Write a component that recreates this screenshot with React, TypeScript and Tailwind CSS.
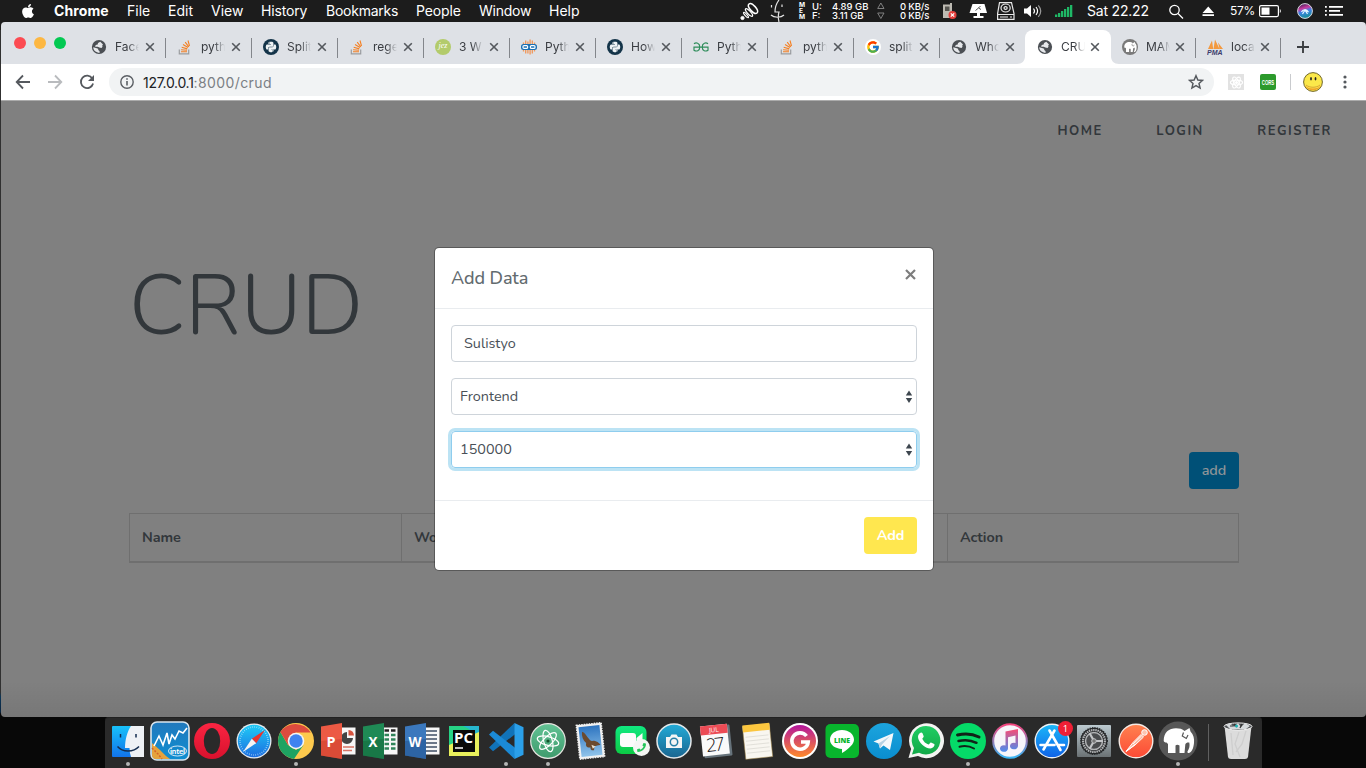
import React from "react";
import { FaApple, FaPython, FaPhoneAlt } from "react-icons/fa";
import { FcGoogle } from "react-icons/fc";

/* ---------- menu bar ---------- */

const menus: [string, string][] = [
  ["Chrome", "w-[73px] font-bold tracking-[0.1px]"],
  ["File", "w-[41px]"],
  ["Edit", "w-[43px]"],
  ["View", "w-[50px]"],
  ["History", "w-[65px] tracking-[-0.15px]"],
  ["Bookmarks", "w-[90px] tracking-[-0.25px]"],
  ["People", "w-[63px] tracking-[-0.15px]"],
  ["Window", "w-[70px] tracking-[-0.25px]"],
  ["Help", "w-[60px]"],
];

function MenuBar() {
  return (
    <header className="flex h-[22px] shrink-0 items-center bg-[#1c1c1c] text-[14px] leading-[22px] text-white">
      <div className="w-[54px] shrink-0 pl-[20px]">
        <FaApple size={16} />
      </div>
      {menus.map(([name, cls]) => (
        <span key={name} className={`shrink-0 whitespace-nowrap ${cls}`}>
          {name}
        </span>
      ))}
      <div className="ml-auto flex h-full shrink-0 items-center">
        <svg className="w-[30px]" height="22" viewBox="0 0 30 22" fill="none" stroke="#fff">
          <circle cx="2.500" cy="18" r="1.600" fill="#fff" />
          <ellipse cx="13" cy="8.500" rx="2.800" ry="6" strokeWidth="1.500" transform="rotate(-42 13 8.500)" />
          <ellipse cx="9" cy="12.500" rx="1.600" ry="5" strokeWidth="1.300" transform="rotate(-42 9 12.500)" />
          <ellipse cx="6" cy="15" rx="1" ry="3.500" strokeWidth="1.200" transform="rotate(-42 6 15)" />
        </svg>
        <svg className="w-[29px]" height="22" viewBox="0 0 29 22" fill="none" stroke="#e4e4e4" strokeWidth="1.200">
          <path d="M9 0C6 4 5 8 5 12h4c-1 3-1 6 0 10M1 15c3 3 10 3 13 0M1.500 5v2.500M12 4.500V7" />
        </svg>
        <div className="flex w-[13px] flex-col text-[6.500px] leading-[6.300px] font-bold">
          <span>M</span>
          <span>E</span>
          <span>M</span>
        </div>
        <div className="flex w-[17px] flex-col text-[9.500px] leading-[9.500px] font-medium">
          <span>U:</span>
          <span>F:</span>
        </div>
        <div className="flex w-[48px] flex-col pl-[3px] text-[9.500px] leading-[9.500px] font-medium whitespace-nowrap">
          <span>4.89 GB</span>
          <span>3.11 GB</span>
        </div>
        <svg className="w-[23px]" height="22" viewBox="0 0 23 22" fill="none" stroke="#8a8a8a" strokeWidth="0.900">
          <path d="M0.700 8.500h6.300l-3.150-5.500zM0.700 13h6.300l-3.150 5.500z" />
        </svg>
        <div className="flex w-[43px] flex-col text-[9.500px] leading-[9.500px] font-medium tracking-[-0.15px] whitespace-nowrap">
          <span>0 KB/s</span>
          <span>0 KB/s</span>
        </div>
        <svg className="w-[26px]" height="22" viewBox="0 0 26 22">
          <path d="M0 4.500h7V3h2v15H0z" fill="#bdbab2" />
          <path d="M2 6.500h4.500v4.500H2z" fill="#55544f" />
          <circle cx="9.500" cy="15" r="4" fill="#e5403d" />
          <path d="M7.800 13.300l3.400 3.400m0-3.400l-3.400 3.400" stroke="#fff" strokeWidth="1.200" />
        </svg>
        <svg className="w-[28px]" height="22" viewBox="0 0 28 22">
          <path d="M3.500 4h12l2.500 9H0.500z" fill="#fff" />
          <path d="M6.500 10.500l3-2.500 2.500 1.500M9.500 8l2-2" stroke="#444" strokeWidth="0.900" fill="none" />
          <path d="M8 13h3v3h3.500v2h-10v-2H8z" fill="#fff" />
        </svg>
        <svg className="w-[27px]" height="22" viewBox="0 0 27 22" fill="none" stroke="#e8e8e8" strokeWidth="1.200">
          <path d="M2.500 2.600h12l2.500 11v5.800H0.600v-5.800zM0.600 14.500H17" />
          <ellipse cx="8.600" cy="8" rx="4.600" ry="4" />
          <ellipse cx="8.600" cy="8" rx="1.600" ry="1.300" />
          <path d="M3 17h8M13 17h2" />
        </svg>
        <svg className="w-[31px]" height="22" viewBox="0 0 31 22" fill="none" stroke="#fff" strokeWidth="1.200">
          <path d="M0 8.500h3l4-3.500v12l-4-3.500H0z" fill="#fff" stroke="none" />
          <path d="M9.500 8.500c1.200 1.500 1.200 3.500 0 5M12 7c2 2.500 2 5.500 0 8" />
          <path d="M14.300 5.300c3 3.500 3 8 0 11.500" stroke="#999" />
        </svg>
        <svg className="w-[32px]" height="22" viewBox="0 0 32 22" fill="#1fb866">
          <path d="M0 14.500h2.300V17H0zM3 13h2.300v4H3zM6 11h2.300v6H6zM9 9h2.300v8H9zM12 7h2.300v10H12zM15 5h2.300v12H15z" />
        </svg>
        <span className="w-[82px] tracking-[-0.2px] whitespace-nowrap">Sat 22.22</span>
        <svg className="w-[33px]" height="22" viewBox="0 0 33 22" fill="none" stroke="#fff" strokeWidth="1.300">
          <circle cx="5.500" cy="10" r="4.700" />
          <path d="M9 13.500l5 5" />
        </svg>
        <svg className="w-[28px]" height="22" viewBox="0 0 28 22" fill="#fff">
          <path d="M0.500 13L6.300 6.500l5.700 6.500zM0.500 14.300H12v1.800H0.500z" />
        </svg>
        <span className="w-[29px] text-[12px] tracking-[-0.3px]">57%</span>
        <svg className="w-[38px]" height="22" viewBox="0 0 38 22">
          <rect x="0.600" y="5.600" width="18.800" height="11" rx="1.500" fill="none" stroke="#fff" strokeWidth="1.200" />
          <path d="M2.500 7.500h8v7.200h-8z" fill="#fff" />
          <path d="M20.800 9v4c1.400-.5 1.400-3.500 0-4z" fill="#fff" />
        </svg>
        <svg className="w-[28px]" height="22" viewBox="0 0 28 22">
          <defs>
            <linearGradient id="siri" x1="0" y1="0" x2="0.300" y2="1">
              <stop offset="0" stopColor="#1b1840" />
              <stop offset="0.400" stopColor="#c93ca0" />
              <stop offset="0.600" stopColor="#3f7fe6" />
              <stop offset="1" stopColor="#1a8fa0" />
            </linearGradient>
          </defs>
          <circle cx="8" cy="11" r="7.400" fill="url(#siri)" stroke="#d8d8e0" strokeWidth="1" />
          <path d="M4.500 12c1-2 4.500-4 7 0l-3.500-2-2.500 4M8 10l2.500 4" stroke="#e4f6ff" strokeWidth="1.200" fill="none" />
        </svg>
        <svg className="w-[41px]" height="22" viewBox="0 0 41 22" fill="#fff">
          <path d="M0 6h1.800v1.800H0zM4 6h14v1.800H4zM0 10h1.800v1.800H0zM4 10h11v1.800H4zM0 14h1.800v1.800H0zM4 14h14v1.800H4z" />
        </svg>
      </div>
    </header>
  );
}

/* ---------- favicons ---------- */

function Globe() {
  return (
    <svg width="16" height="16" viewBox="0 0 16 16">
      <circle cx="8" cy="8" r="7.100" fill="#4b4f54" />
      <path d="M9.300 2.800L7 4l-.3 1.600-2 .5-.6 1.600h2.700l1.500.9 2.200.3 1-1.200-.3-1.200L12 5.500z" fill="#e6e8eb" />
      <path d="M2.200 8.300l2.800.6 2.200.9v1.300l1.300 1 .2 1.700C5 13.800 2.400 11.500 2.200 8.300z" fill="#e6e8eb" />
    </svg>
  );
}
function Stack() {
  return (
    <svg width="16" height="16" viewBox="0 0 16 16" fill="none">
      <path d="M2.300 10.500v4.300h9.400v-4.300" stroke="#9b9da0" strokeWidth="1.200" />
      <path d="M4 12.800h6M4.100 10.700l5.900.6M4.700 8.200l5.600 1.700M6 5.500l5 3M8.200 3.200l3.600 4.600M11 1.500l1.500 5.500" stroke="#f48024" strokeWidth="1.100" />
    </svg>
  );
}
function PyCircle() {
  return (
    <span className="flex size-4 items-center justify-center rounded-full bg-[#143449] text-[#eef2f4]">
      <FaPython size={12} />
    </span>
  );
}
function Jez() {
  return (
    <span className="flex size-4 items-center justify-center rounded-full bg-[#b3cb6b] pb-[2px] font-['Liberation_Serif'] text-[8px] leading-none text-white italic">
      jez
    </span>
  );
}
function Goggles() {
  return (
    <svg width="16" height="16" viewBox="0 0 16 16" fill="none">
      <path d="M2.500 3.500v9M4.700 1.500v13M6.900 2.500v12M9.100 .5v15M11.300 1.500v13M13.500 3.500v9" stroke="#f0975a" strokeWidth="1.300" />
      <rect x="0" y="5" width="16" height="6" rx="2.500" fill="#1c71b4" />
      <rect x="2" y="6.600" width="4.600" height="2.800" rx="1" stroke="#fff" strokeWidth="1.200" />
      <rect x="9.400" y="6.600" width="4.600" height="2.800" rx="1" stroke="#fff" strokeWidth="1.200" />
    </svg>
  );
}
function Geeks() {
  return (
    <svg width="16" height="16" viewBox="0 0 16 16" fill="none" stroke="#2f8d5b" strokeWidth="1.200">
      <path d="M1 4.800C3 3.200 6.800 3.800 6.800 8c0 4-3.500 4.800-5.800 3.200V8.200H15v3C12.700 12.800 9.200 12 9.200 8c0-4.200 3.800-4.800 5.800-3.200" />
    </svg>
  );
}
function GoogleIcon() {
  return (
    <span className="flex size-4 items-center justify-center rounded-full bg-white">
      <FcGoogle size={14} />
    </span>
  );
}

const elephant =
  "M9.500 25.500C8 25.500 6.700 25 6.700 23.500 6.700 15.500 12 11.300 19 11.300c3.500 0 6.500.7 8.500 2.700L32.500 11l1 3.500c3 3 4 7 3.500 11.500-.5 5-2 9.300-5 10-1 .2-2-.5-1.500-1.500 1.800-3 2.500-5.500 1.800-9-1.800-.3-3.300 0-4 2L27.500 36H22.500V28.500c-1.500-1-3-1-4 0V36H11V27z";

function Mamp() {
  return (
    <span className="flex size-4 items-center justify-center rounded-full bg-[#7a7a7a]">
      <svg width="13" height="12" viewBox="6 10 32 27">
        <path d={elephant} fill="#fff" />
        <path d="M26.500 15.500L25.300 19l4 2.500 1.700-3.500" fill="none" stroke="#7a7a7a" strokeWidth="1.500" />
      </svg>
    </span>
  );
}
function Pma() {
  return (
    <svg width="16" height="16" viewBox="0 0 16 16">
      <path d="M1 10L5 1.500 6.200 10zM6.500 10L8 0.500l4.500 9.500zM12.500 10L11 3.500l5 6.500z" fill="#f3993f" />
      <text x="0" y="15.500" fontFamily="Liberation Sans" fontSize="6.500" fontWeight="bold" fontStyle="italic" fill="#3c3c6c" textLength="15.500" lengthAdjust="spacingAndGlyphs">
        PMA
      </text>
    </svg>
  );
}

const tabs: { t: string; icon: React.ReactNode; active?: boolean; noSep?: boolean; last?: boolean }[] = [
  { t: "Face", icon: <Globe /> },
  { t: "pyth", icon: <Stack /> },
  { t: "Split", icon: <PyCircle /> },
  { t: "rege", icon: <Stack /> },
  { t: "3 W", icon: <Jez /> },
  { t: "Pyth", icon: <Goggles /> },
  { t: "How", icon: <PyCircle /> },
  { t: "Pyth", icon: <Geeks /> },
  { t: "pyth", icon: <Stack /> },
  { t: "split", icon: <GoogleIcon /> },
  { t: "Who", icon: <Globe />, noSep: true },
  { t: "CRU", icon: <Globe />, active: true },
  { t: "MAM", icon: <Mamp />, last: true },
  { t: "loca", icon: <Pma />, last: true },
];

function Close() {
  return (
    <svg width="10" height="10" viewBox="0 0 10 10" stroke="#54585d" strokeWidth="1.600" className="shrink-0">
      <path d="M1.200 1.200l7.600 7.600M8.800 1.200L1.200 8.800" />
    </svg>
  );
}

function TabStrip() {
  return (
    <div className="flex h-[42px] shrink-0 items-end bg-[#dee1e6]">
      <div className="flex h-[42px] w-[78px] shrink-0 gap-[8px] pt-[15px] pl-[13px]">
        <i className="size-3 rounded-full bg-[#fc4b52]" />
        <i className="size-3 rounded-full bg-[#fdb742]" />
        <i className="size-3 rounded-full bg-[#02c952]" />
      </div>
      {tabs.map((tab, i) => (
        <div
          key={i}
          className={`relative flex h-[34px] shrink-0 items-center ${tab.last ? "w-[85px] pl-[11px]" : "w-[86px] pl-[12px]"} ${
            tab.active ? "rounded-t-[8px] bg-white" : ""
          }`}
        >
          {tab.active && (
            <>
              <svg className="absolute bottom-0 -left-2" width="8" height="8" viewBox="0 0 8 8">
                <path d="M8 0v8H0c5 0 8-3 8-8z" fill="#fff" />
              </svg>
              <svg className="absolute -right-2 bottom-0" width="8" height="8" viewBox="0 0 8 8">
                <path d="M0 0v8h8c-5 0-8-3-8-8z" fill="#fff" />
              </svg>
            </>
          )}
          <span className="shrink-0">{tab.icon}</span>
          <span className="ml-[8px] w-[24px] shrink-0 text-[12px] whitespace-nowrap text-[#3a3d42] [mask-image:linear-gradient(to_right,#000_55%,transparent)]">
            {tab.t}
          </span>
          <span className={tab.active || tab.last ? "ml-[5px]" : "ml-[6px]"}>
            <Close />
          </span>
          {!tab.active && !tab.noSep && (
            <i className={`absolute top-[8px] h-[20px] w-px bg-[#83868b] ${tab.last ? "right-0" : "-right-px"}`} />
          )}
        </div>
      ))}
      <svg className="ml-[15px] self-end" width="14" height="34" viewBox="0 0 14 34" stroke="#3b3e42" strokeWidth="1.900">
        <path d="M1 17h12M7 11v12" />
      </svg>
    </div>
  );
}

function Toolbar() {
  return (
    <div className="flex h-[37px] shrink-0 items-start border-b border-[#ababab] bg-white pt-[4px]">
      <svg className="shrink-0" width="108" height="28" viewBox="1 68 108 28" fill="none" strokeWidth="1.800">
        <path d="M30 82H17M23 75.500L16.700 82l6.300 6.500" stroke="#55595e" />
        <path d="M48 82h13M55 75.500l6.300 6.500-6.300 6.500" stroke="#b9bbbe" />
        <path d="M92.300 78.500a6.200 6.200 0 1 0 .8 5" stroke="#55595e" />
        <path d="M94 75v6h-6z" fill="#55595e" />
      </svg>
      <div className="flex h-[28px] w-[1105px] shrink-0 items-center rounded-full bg-[#f1f3f4] pr-[10px] pl-[11px]">
        <svg width="14" height="14" viewBox="0 0 14 14" fill="none" stroke="#5b5f64" strokeWidth="1.400">
          <circle cx="7" cy="7" r="6.200" />
          <path d="M7 6v4.500M7 3.300v1.500" strokeWidth="1.600" />
        </svg>
        <span className="ml-[9px] text-[14px] tracking-[-0.3px] text-[#202124]">
          127.0.0.1<span className="tracking-[0.4px] text-[#7b7f84]">:8000/crud</span>
        </span>
        <svg className="ml-auto" width="16" height="16" viewBox="0 0 24 24" fill="none" stroke="#55595e" strokeWidth="2.200">
          <path d="M12 2.500l2.800 6.500 7 .6-5.300 4.600 1.600 6.900-6.100-3.700-6.100 3.700 1.600-6.900L2.200 9.600l7-.6z" />
        </svg>
      </div>
      <div className="flex h-[28px] flex-1 items-center">
        <span className="ml-[14px] flex size-4 items-center justify-center bg-[#e2e2e2]">
          <svg width="15" height="15" viewBox="0 0 16 16" fill="none" stroke="#fff" strokeWidth="1.200">
            <ellipse cx="8" cy="8" rx="6.500" ry="2.600" />
            <ellipse cx="8" cy="8" rx="6.500" ry="2.600" transform="rotate(60 8 8)" />
            <ellipse cx="8" cy="8" rx="6.500" ry="2.600" transform="rotate(120 8 8)" />
            <circle cx="8" cy="8" r="1" fill="#fff" />
          </svg>
        </span>
        <svg className="ml-[16px]" width="16" height="16" viewBox="0 0 16 16" overflow="visible">
          <rect width="16" height="16" rx="2" fill="#2c9a2c" />
          <text x="1.800" y="11" fontFamily="Liberation Sans Narrow, Liberation Sans" fontSize="8" fontWeight="bold" fill="#fff" textLength="12.400" lengthAdjust="spacingAndGlyphs">
            CORS
          </text>
        </svg>
        <i className="ml-[14px] h-[16px] w-px bg-[#c9cbce]" />
        <svg className="ml-[12px]" width="20" height="20" viewBox="0 0 20 20">
          <circle cx="10" cy="10" r="9.400" fill="#fbe84a" stroke="#5f5620" strokeWidth="0.900" />
          <path d="M1.500 13c3.500 7 13.500 7 17 0-2 2.500-5 3.500-8.500 3.500s-6.500-1-8.500-3.500z" fill="#f0a52c" />
          <path d="M3 13c3.500 3 10.500 3 14 0" fill="none" stroke="#c9882a" strokeWidth="0.700" />
          <ellipse cx="8" cy="6.800" rx="0.900" ry="1.800" fill="#222" />
          <ellipse cx="12.500" cy="6.800" rx="0.900" ry="1.800" fill="#222" />
        </svg>
        <svg className="ml-[20px]" width="4" height="14" viewBox="0 0 4 14" fill="#55595e">
          <circle cx="2" cy="2" r="1.600" />
          <circle cx="2" cy="7" r="1.600" />
          <circle cx="2" cy="12" r="1.600" />
        </svg>
      </div>
    </div>
  );
}

/* ---------- web page ---------- */

function Chevrons() {
  return (
    <svg width="8" height="14" viewBox="0 0 8 14" fill="#3e474f">
      <path d="M4 0.500L7.200 5.500H0.800zM4 13L0.800 8h6.400z" />
    </svg>
  );
}

function Page() {
  return (
    <main className="relative h-[616px] shrink-0 overflow-hidden bg-[#808080] font-['Nunito','Lato',sans-serif] text-[#32373b] subpixel-antialiased">
      <nav className="flex justify-end gap-[53.500px] pt-[20px] pr-[34px] text-[13px] leading-[20px] font-bold tracking-[1.500px]">
        <a>HOME</a>
        <a>LOGIN</a>
        <a>REGISTER</a>
      </nav>
      <div className="mr-[127px] ml-[128px]">
        <h1 className="mt-[115px] h-[102px] text-[84px] leading-[102px] font-light">CRUD</h1>
        <div className="mt-[94px] flex justify-end">
          <button className="h-[37px] w-[50px] rounded-[4px] bg-[#005077] text-[14.400px] font-semibold text-[#8e9498]">add</button>
        </div>
        <table className="mt-[24px] h-[50px] w-full table-fixed border-collapse text-left text-[14.400px]">
          <thead>
            <tr className="border border-b-2 border-[#6f6f6f]">
              <th className="w-[272px] border border-b-2 border-[#6f6f6f] px-[12px] font-bold tracking-[-0.1px]">Name</th>
              <th className="w-[273px] border border-b-2 border-[#6f6f6f] px-[12px] font-bold tracking-[-0.1px]">Work</th>
              <th className="w-[273px] border border-b-2 border-[#6f6f6f] px-[12px] font-bold tracking-[-0.1px]">Salary</th>
              <th className="border border-b-2 border-[#6f6f6f] px-[12px] font-bold tracking-[-0.1px]">Action</th>
            </tr>
          </thead>
        </table>
      </div>

      <div className="absolute inset-0 flex items-start justify-center bg-[linear-gradient(to_bottom,transparent_580px,rgba(0,0,0,0.07))] pt-[146px] pl-px">
        <section className="w-[500px] rounded-[5px] border border-black/30 bg-white bg-clip-padding text-[14.400px] text-[#495057]">
          <div className="flex h-[61px] items-start justify-between border-b border-[#e9ecef] px-[16px]">
            <h5 className="pt-[18px] text-[18px] leading-[24px] font-medium tracking-[-0.1px] text-[#636b6f]">Add Data</h5>
            <svg className="mt-[21px] mr-[1px]" width="11" height="11" viewBox="0 0 11 11" stroke="#7d7d7d" strokeWidth="2.200">
              <path d="M1 1l9 9M10 1l-9 9" />
            </svg>
          </div>
          <div className="flex flex-col gap-[16px] px-[16px] pt-[16px] pb-[32px]">
            <div className="flex h-[37px] items-center rounded-[4px] border border-[#ced4da] px-[12px]">Sulistyo</div>
            <div className="flex h-[37px] items-center justify-between rounded-[4px] border border-[#ced4da] pr-[3px] pl-[8px]">
              Frontend
              <Chevrons />
            </div>
            <div className="flex h-[37px] items-center justify-between rounded-[4px] border border-[#8fcdee] pr-[3px] pl-[8px] shadow-[0_0_0_3px_#bce3f4]">
              150000
              <Chevrons />
            </div>
          </div>
          <div className="flex h-[70px] items-center justify-end border-t border-[#e9ecef] px-[16px]">
            <button className="h-[37px] w-[53px] rounded-[4px] bg-[#ffe74f] font-bold tracking-[-0.1px] text-white">Add</button>
          </div>
        </section>
      </div>
    </main>
  );
}

/* ---------- dock ---------- */

const book = (c1: string, c2: string, letter: string, inner: React.ReactNode) => (
  <>
    <rect x="20" y="10.500" width="18.500" height="27" fill="#f7f7f7" />
    {inner}
    <path d="M4 9.500L25 6v36L4 38.500z" fill={c1} />
    <path d="M4 24L25 22v20L4 38.500z" fill={c2} opacity="0.500" />
    <text x="14" y="29.500" textAnchor="middle" fontFamily="Open Sans" fontWeight="bold" fontSize="15" fill="#fff" textLength={letter === "W" ? 13 : 9} lengthAdjust="spacingAndGlyphs">
      {letter}
    </text>
  </>
);

const dock: { art: React.ReactNode; run?: boolean }[] = [
  {
    run: true,
    art: (
      <>
        <rect x="5" y="9" width="32" height="31" rx="1" fill="url(#finder)" />
        <path d="M24 9h13v31H24c-1-3-1.500-6-1.500-9h-4.500c0-8 2-16 6-22z" fill="#eef1f6" />
        <path d="M13.500 17v3.500M29 17v3.500" stroke="#132c50" strokeWidth="1.500" />
        <path d="M10.500 29.500c5 6 16 6 21.500 0" stroke="#132c50" strokeWidth="1.400" fill="none" />
      </>
    ),
  },
  {
    art: (
      <>
        <rect x="2" y="5" width="38" height="38" rx="6" fill="url(#intel)" stroke="#d9e5ee" strokeWidth="1.600" />
        <path d="M3 26l8 7 6 6 4 3H7q-4 0-4-4z" fill="#e5a33c" />
        <path d="M3 31l6 6 4 5" stroke="#d6622a" strokeDasharray="2 1.500" strokeWidth="1.500" fill="none" />
        <path d="M5 29l5-10 4 9 4-12 2 11 3-9 3 4 4-8 4 2 4-5" stroke="#fff" strokeWidth="1.600" fill="none" />
        <ellipse cx="28.500" cy="34" rx="9" ry="5" fill="none" stroke="#fff" strokeWidth="0.800" />
        <text x="28.500" y="36.700" textAnchor="middle" fontFamily="Lato" fontSize="8" fill="#fff" fontWeight="bold" textLength="15">
          intel
        </text>
      </>
    ),
  },
  {
    art: (
      <>
        <circle cx="21" cy="24" r="18" fill="url(#opera)" />
        <ellipse cx="21" cy="24" rx="8.200" ry="13" fill="#2a2a2a" />
      </>
    ),
  },
  {
    art: (
      <>
        <circle cx="21" cy="24" r="17.500" fill="#e6eaee" />
        <circle cx="21" cy="24" r="16.200" fill="url(#safari)" />
        <circle cx="21" cy="24" r="14" fill="none" stroke="#c6ebff" strokeWidth="1.600" strokeDasharray="0.500 1.700" />
        <path d="M32 13L18.800 21.800l4.400 4.400z" fill="#e8352f" />
        <path d="M10 35l8.800-13.200 4.400 4.400z" fill="#f3f3f3" />
      </>
    ),
  },
  {
    run: true,
    art: (
      <>
        <circle cx="21" cy="24" r="18" fill="#fdc94d" />
        <path d="M5.400 15A18 18 0 0 0 19 41.900L28.500 28 21 33l-8-5z" fill="#1ea362" />
        <path d="M21 15.500h14.800A18 18 0 0 0 5.400 15l8 13.500 3-10z" fill="#dd4b3e" />
        <circle cx="21" cy="24" r="8.300" fill="#f4f4f4" />
        <circle cx="21" cy="24" r="6.700" fill="#3f83ef" />
      </>
    ),
  },
  {
    art: book(
      "#ec5a44",
      "#c93c2a",
      "P",
      <>
        <path d="M30 15a6 6 0 1 0 6 6h-6z" fill="#444" />
        <path d="M31.500 13a6 6 0 0 1 5.500 5.500h-5.500z" fill="#d6543f" />
        <path d="M26 30h11M26 33.500h9" stroke="#d87566" strokeWidth="1.500" />
      </>
    ),
  },
  {
    art: book(
      "#1f8a55",
      "#116639",
      "X",
      <>
        <path d="M25.500 13.500h4.500M32 13.500h4.500" stroke="#222" strokeWidth="2.600" />
        <path d="M25.500 18h4.500M25.500 22.500h4.500M25.500 27h4.500M25.500 31.500h4.500M32 18h4.500M32 22.500h4.500M32 27h4.500M32 31.500h4.500" stroke="#2f8459" strokeWidth="2.600" />
      </>
    ),
  },
  {
    art: book(
      "#3b78bd",
      "#1f4f8c",
      "W",
      <path d="M25 14h11M25 18h11M25 22h11M25 26h11M25 30h11M25 34h11" stroke="#3f4f66" strokeWidth="1.600" />
    ),
  },
  {
    art: (
      <>
        <rect x="6" y="9" width="30" height="30" fill="#26d285" />
        <path d="M20 9h16v14L26 12z" fill="#27b7cf" />
        <path d="M36 15v24H6V28z" fill="#e8ef5c" />
        <rect x="10" y="13" width="22" height="22" fill="#0a0a0a" />
        <text x="11" y="25.500" fontFamily="Open Sans" fontWeight="bold" fontSize="14.500" fill="#fff" textLength="19" lengthAdjust="spacingAndGlyphs">
          PC
        </text>
        <path d="M12 31h8" stroke="#fff" strokeWidth="1.500" />
      </>
    ),
  },
  {
    run: true,
    art: (
      <>
        <path d="M4 30.500L8 34.200 31 16.500 29.500 6z" fill="#1173b9" />
        <path d="M4 17.500L8 13.800l23 17.700L29.500 42z" fill="#1b8ad6" />
        <path d="M29.500 6l9 4.300v27.400l-9 4.300z" fill="#2ba0ea" />
      </>
    ),
  },
  {
    run: true,
    art: (
      <>
        <circle cx="21" cy="24" r="17.300" fill="url(#atom)" stroke="#e5e5e0" strokeWidth="1.200" />
        <g fill="none" stroke="#fff" strokeWidth="1.200">
          <ellipse cx="21" cy="24" rx="11" ry="4.300" transform="rotate(15 21 24)" />
          <ellipse cx="21" cy="24" rx="11" ry="4.300" transform="rotate(75 21 24)" />
          <ellipse cx="21" cy="24" rx="11" ry="4.300" transform="rotate(135 21 24)" />
        </g>
        <circle cx="21" cy="24" r="1.600" fill="#14532d" />
      </>
    ),
  },
  {
    art: (
      <g transform="rotate(-6 21 24)">
        <rect x="9" y="7" width="25" height="34" fill="#f1f1f1" stroke="#f1f1f1" strokeWidth="1.500" strokeDasharray="1.500 1" />
        <rect x="11" y="9" width="21" height="30" fill="url(#mail)" />
        <path d="M14 14c3 1 4 5 7 9 1 1 2 1.500 3 1 2 0 6 2 7 5-2-.5-4 .5-6 .5l-1 4c-2 .5-4-1-3-3-4 0-5-2-4-5-3-3-4-7-3-11.500z" fill="#6b4a2e" />
        <path d="M22 28l4 2-3 2z" fill="#e8e0cf" />
      </g>
    ),
  },
  {
    art: (
      <>
        <rect x="4.500" y="9" width="31" height="28" rx="6" fill="url(#ft)" />
        <rect x="9" y="16" width="16" height="14" rx="3" fill="#fbfbfb" />
        <path d="M25.500 21l6-5v13l-6-4z" fill="#fbfbfb" />
        <circle cx="30.500" cy="30.500" r="8.500" fill="#f4f6f4" />
        <g transform="translate(26 26)" color="#25c55a">
          <g transform="translate(9 0) scale(-1 1)">
            <FaPhoneAlt size={9} />
          </g>
        </g>
      </>
    ),
  },
  {
    art: (
      <>
        <circle cx="21" cy="24" r="17" fill="url(#cam)" stroke="#e4e8ea" strokeWidth="1.500" />
        <path d="M13 20h4l1.500-2.500h5L25 20h4v11H13z" fill="#f5f5f5" />
        <circle cx="21" cy="25" r="3.700" fill="#f5f5f5" stroke="#277fa6" strokeWidth="1.500" />
      </>
    ),
  },
  {
    art: (
      <g transform="rotate(-6 21 24)">
        <rect x="8" y="9" width="28" height="31" rx="1" fill="#67737b" />
        <rect x="6.500" y="8" width="27" height="30" fill="#fafafa" />
        <rect x="6.500" y="8" width="27" height="9" fill="#ec4b55" />
        <text x="20" y="15" textAnchor="middle" fontFamily="Open Sans" fontSize="6.500" fill="#fff">
          JUL
        </text>
        <text x="20" y="34" textAnchor="middle" fontFamily="Open Sans" fontSize="18.500" fontWeight="300" fill="#111" textLength="18.500">
          27
        </text>
      </g>
    ),
  },
  {
    art: (
      <g transform="rotate(-6 21 24)">
        <rect x="7" y="8" width="27" height="33" fill="#f8f6f0" stroke="#a88c4c" strokeWidth="0.500" />
        <rect x="7" y="7" width="27" height="7" fill="#fbc63f" />
        <path d="M9 19h23M9 23h23M9 27h23M9 31h23M9 35h23" stroke="#d9d7d1" strokeWidth="0.700" />
      </g>
    ),
  },
  {
    art: (
      <>
        <circle cx="21" cy="24" r="18" fill="#fff" />
        <circle cx="21" cy="24" r="16" fill="url(#gram)" />
        <path d="M27.500 19a8.200 8.200 0 1 0 1.700 6H22" fill="none" stroke="#fff" strokeWidth="3.600" />
      </>
    ),
  },
  {
    art: (
      <>
        <rect x="4.500" y="7" width="33.500" height="34" rx="5" fill="#08b52d" />
        <path d="M21 13c7 0 12 4.300 12 9.800 0 4-5 9.200-12 13.200v-4c-7-.3-12-4-12-9.200C9 17.300 14 13 21 13z" fill="#fff" />
        <text x="21" y="25.500" textAnchor="middle" fontFamily="Open Sans" fontSize="7.500" fontWeight="800" fill="#08b52d" textLength="16" lengthAdjust="spacingAndGlyphs">
          LINE
        </text>
      </>
    ),
  },
  {
    art: (
      <>
        <circle cx="21" cy="24" r="18" fill="url(#tele)" />
        <path d="M10.500 24.500L30.500 16l-3.500 17-6.500-4.500-3.500 3-1.500-5z" fill="#f4f8fb" />
        <path d="M15.500 26.500L27 19l-8 8.500-2 4z" fill="#b7d2e3" />
      </>
    ),
  },
  {
    art: (
      <>
        <path d="M3.500 41l2.600-9A17.500 17.500 0 1 1 13 39z" fill="#f4f4f2" />
        <path d="M7 37.500l2-6.500A14.300 14.300 0 1 1 14 35.700z" fill="url(#wa)" />
        <path d="M15 16c1-1 2-.6 2.500.3l1.200 3c.2.8-1.500 2-1.300 2.600 1.300 2.700 3.300 4.500 6 5.500.8.200 1.800-2.200 2.600-1.900l3.200 1.600c1 .6-.5 4.400-4 4.400-5 0-12-6-12.200-11.500 0-1.600.8-3 2-4z" fill="#fff" />
      </>
    ),
  },
  {
    run: true,
    art: (
      <>
        <circle cx="21" cy="24" r="18" fill="#05db68" />
        <g fill="none" stroke="#112318" strokeLinecap="round">
          <path d="M10.500 18c8-2 15-1.300 21.500 2" strokeWidth="3" />
          <path d="M11.500 24c7-1.700 12.500-1 18 1.800" strokeWidth="2.500" />
          <path d="M12.500 29.700c5-1.200 10-.7 14.500 1.800" strokeWidth="2" />
        </g>
      </>
    ),
  },
  {
    art: (
      <>
        <circle cx="21" cy="24" r="16.800" fill="#f7f5fa" stroke="url(#itring)" strokeWidth="2" />
        <path d="M16.500 14.500L29 12v17a4 3.300 0 1 1-2.500-3V18.500l-7.500 1.700V31.500a4 3.300 0 1 1-2.500-3z" fill="url(#itnote)" />
      </>
    ),
  },
  {
    art: (
      <>
        <circle cx="21" cy="24" r="16.800" fill="url(#appst)" stroke="#eef2f5" strokeWidth="1.400" />
        <path d="M18.500 13.500L29.500 33M23.500 13.500L14.500 29M12.500 32.500L14 30M9.500 28h14M27 28h6" stroke="#fff" strokeWidth="2.600" strokeLinecap="round" />
        <circle cx="34.500" cy="11.500" r="7.500" fill="#f01f35" />
        <text x="34.500" y="15" textAnchor="middle" fontFamily="Open Sans" fontSize="9.500" fill="#fff">
          1
        </text>
      </>
    ),
  },
  {
    art: (
      <>
        <rect x="4" y="8" width="34" height="32" rx="1" fill="url(#prefs)" />
        <circle cx="21" cy="24" r="13.300" fill="#26282a" />
        <circle cx="21" cy="24" r="12.700" fill="none" stroke="#26282a" strokeWidth="2.500" strokeDasharray="1.300 1" />
        <circle cx="21" cy="24" r="11" fill="none" stroke="#b2b4b6" strokeWidth="2.200" strokeDasharray="1.500 .7" />
        <circle cx="21" cy="24" r="8.500" fill="#4a4c4e" stroke="#b2b4b6" strokeWidth="1.500" />
        <path d="M21 24l-4.500-8M21 24h9M21 24l-4.500 8" stroke="#c2c4c6" strokeWidth="2.200" />
        <circle cx="21" cy="24" r="2.300" fill="#777" stroke="#c2c4c6" />
      </>
    ),
  },
  {
    art: (
      <>
        <circle cx="21" cy="24" r="16.800" fill="url(#post)" stroke="#f4e9e4" strokeWidth="1.400" />
        <circle cx="29.500" cy="15.500" r="2.800" fill="#fbc5b1" stroke="#fff" strokeWidth="1" />
        <path d="M11 34.500l7-9L26 17.500l2.500 2.500-8.500 8z" fill="#f9b8a0" stroke="#fff" strokeWidth="1" />
        <path d="M18 27l8.500-8M11 34.500l9-7" stroke="#fff" strokeWidth="0.900" />
      </>
    ),
  },
  {
    run: true,
    art: (
      <>
        <circle cx="21" cy="24" r="19.500" fill="#575757" />
        <path d={elephant} fill="#fff" />
        <path d="M26.500 15.500L25.300 19l4 2.500 1.700-3.500" fill="none" stroke="#575757" strokeWidth="1.200" />
      </>
    ),
  },
];

const grads: [string, string, string][] = [
  ["finder", "#18c1fa", "#1273ea"],
  ["intel", "#2179bd", "#0f8ed1"],
  ["opera", "#fb2542", "#d8112d"],
  ["safari", "#1ecbf7", "#1d6ee0"],
  ["atom", "#62c294", "#3f9b6d"],
  ["mail", "#2d74c0", "#8fc3ea"],
  ["ft", "#10e880", "#0ccb45"],
  ["cam", "#23abd7", "#1a6590"],
  ["gram", "#b3169d", "#ff8a2b"],
  ["tele", "#1ca4dd", "#0a8ed0"],
  ["wa", "#20cd63", "#12a848"],
  ["itring", "#f5447c", "#38b6f5"],
  ["itnote", "#f84c75", "#4a8df0"],
  ["appst", "#1bb8f8", "#0f62e8"],
  ["prefs", "#bccad0", "#6b7275"],
  ["post", "#ff8250", "#fc4a35"],
];

function Dock() {
  return (
    <footer className="ml-[105px] flex h-[51px] w-[1157px] shrink-0 rounded-t-[4px] bg-[#2a2a2a] pl-[2px] shadow-[inset_0_1px_0_#222]">
      <svg width="0" height="0" className="absolute">
        <defs>
          {grads.map(([id, a, b]) => (
            <linearGradient key={id} id={id} x1="0" y1="0" x2="0" y2="1">
              <stop offset="0" stopColor={a} />
              <stop offset="1" stopColor={b} />
            </linearGradient>
          ))}
        </defs>
      </svg>
      {dock.map((d, i) => (
        <svg key={i} width="42" height="51" viewBox="0 0 42 51" className="shrink-0">
          {d.art}
          {d.run && <circle cx="21" cy="47" r="2" fill="#b5b5b5" />}
        </svg>
      ))}
      <i className="mt-[7px] ml-[9px] h-[37px] w-px bg-[#606060]" />
      <svg width="42" height="51" viewBox="0 0 42 51" className="ml-[8px] shrink-0">
        <path d="M7.500 9h27l-3.500 31q-.3 2-3 2H14q-2.700 0-3-2z" fill="#dcdcdc" />
        <path d="M14 16l2 22M22 15l-4 12 5 13M29 14l-4 13-6 8" stroke="#cecece" strokeWidth="1.300" fill="none" />
        <ellipse cx="21" cy="9.500" rx="14" ry="3.600" fill="#4f5255" stroke="#f0f0f0" strokeWidth="1" />
        <path d="M9 8l4-2 4 4 4-4 3 4 4-4 5 3-4 3H13z" fill="#d5d9dc" />
        <path d="M17 7l3 3M25 7l-2 4M13 9h3" stroke="#333" strokeWidth="1.200" />
        <circle cx="19.500" cy="9" r="1.500" fill="#1eb4b6" />
      </svg>
    </footer>
  );
}

export default function App() {
  return (
    <div className="flex h-[768px] w-[1366px] flex-col overflow-hidden bg-[#080808] font-['Inter',sans-serif] antialiased">
      <MenuBar />
      <div className="flex flex-col bg-[linear-gradient(to_bottom,#1c1c1c_8px,#303030_8px,#303030_670px,#0b3557_675px,#0b2540_690px,#080808_692px)] pl-px">
        <div className="flex flex-col overflow-hidden rounded-[4px]">
          <TabStrip />
          <Toolbar />
          <Page />
        </div>
      </div>
      <Dock />
    </div>
  );
}
